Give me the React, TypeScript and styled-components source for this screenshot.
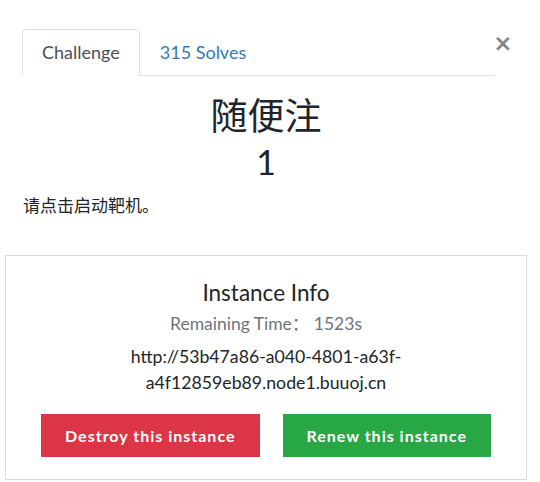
import styled, { createGlobalStyle } from 'styled-components';

const GlobalStyle = createGlobalStyle`
  body {
    margin: 0;
    background: #fff;
    font-family: Lato, "Noto Sans CJK SC", sans-serif;
    color: #212529;
  }
`;

const Modal = styled.div`
  width: 540px;
  box-sizing: border-box;
  padding: 29px 13px 0 5px;
`;

const HeaderRow = styled.div`
  display: flex;
  align-items: flex-start;
  padding-left: 17px;
`;

const Tabs = styled.nav`
  flex: 1;
  display: flex;
  border-bottom: 1px solid #dee2e6;
`;

const Tab = styled.button<{ $active?: boolean }>`
  background: ${p => (p.$active ? '#fff' : 'transparent')};
  border: 1px solid ${p => (p.$active ? '#dee2e6' : 'transparent')};
  border-bottom-color: ${p => (p.$active ? '#fff' : 'transparent')};
  border-radius: 4px 4px 0 0;
  margin-bottom: -1px;
  padding: 10px 19px 10px;
  font-family: Lato, sans-serif;
  font-size: 18px;
  line-height: 25px;
  color: ${p => (p.$active ? '#495057' : '#337ab7')};
  cursor: pointer;
`;

const CloseButton = styled.button`
  background: none;
  border: none;
  width: 16px;
  margin: 0 16px 0 0;
  padding: 3px 0 0;
  font-family: "DejaVu Sans", sans-serif;
  font-size: 23px;
  font-weight: 700;
  line-height: 22px;
  color: #858585;
  cursor: pointer;
  display: flex;
  justify-content: center;
`;

const Body = styled.div`
  text-align: center;
`;

const Title = styled.h2`
  margin: 16px 0 0;
  font-size: 37px;
  font-weight: 400;
  line-height: 48px;
`;

const Value = styled.h3`
  margin: 0;
  font-size: 34px;
  font-weight: 400;
  line-height: 44px;
`;

const Description = styled.p`
  margin: 10px 0 0;
  padding-left: 18px;
  text-align: left;
  font-size: 17px;
  line-height: 24px;
`;

const Card = styled.section`
  margin-top: 37px;
  border: 1px solid #dcdcdc;
  padding: 19px 24px 22px;
  text-align: center;
`;

const CardTitle = styled.h4`
  margin: 0;
  font-size: 22.5px;
  font-weight: 400;
  line-height: 36px;
`;

const Remaining = styled.div`
  font-size: 17.5px;
  line-height: 26px;
  color: #6c757d;
`;

const Url = styled.p`
  margin: 7px 0 0;
  font-size: 17.7px;
  line-height: 25.5px;
`;

const Actions = styled.div`
  display: flex;
  justify-content: center;
  gap: 23px;
  margin-top: 19px;
`;

const ActionButton = styled.button<{ $tone: 'danger' | 'success' }>`
  border: none;
  border-radius: 0;
  height: 43px;
  padding: 0 24px;
  background: ${p => (p.$tone === 'danger' ? '#dc3545' : '#28a745')};
  color: #fff;
  font-family: Lato, sans-serif;
  font-weight: 700;
  font-size: 16px;
  letter-spacing: 1px;
  white-space: nowrap;
  cursor: pointer;
`;

const App = () => {
  return (
    <>
      <GlobalStyle />
      <Modal>
        <HeaderRow>
          <Tabs>
            <Tab $active>Challenge</Tab>
            <Tab>315 Solves</Tab>
          </Tabs>
          <CloseButton aria-label="Close">×</CloseButton>
        </HeaderRow>
        <Body>
          <Title>随便注</Title>
          <Value>1</Value>
          <Description>请点击启动靶机。</Description>
          <Card>
            <CardTitle>Instance Info</CardTitle>
            <Remaining>Remaining Time： 1523s</Remaining>
            <Url>http://53b47a86-a040-4801-a63f-a4f12859eb89.node1.buuoj.cn</Url>
            <Actions>
              <ActionButton $tone="danger">Destroy this instance</ActionButton>
              <ActionButton $tone="success">Renew this instance</ActionButton>
            </Actions>
          </Card>
        </Body>
      </Modal>
    </>
  );
};

export default App;
